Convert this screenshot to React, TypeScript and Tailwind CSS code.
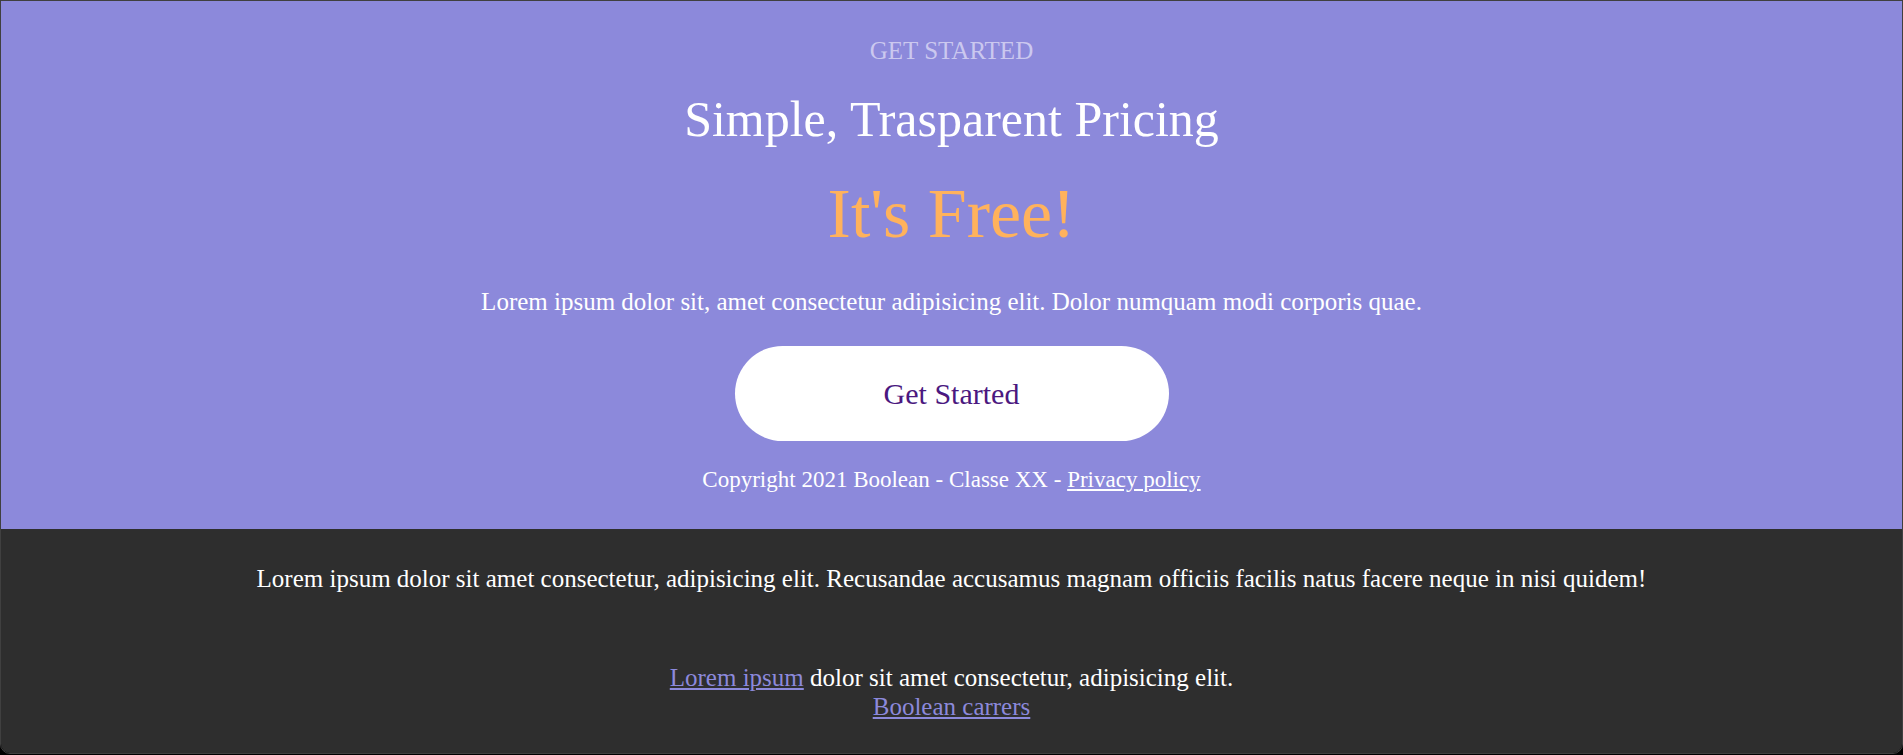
const serif = "font-['Liberation_Serif','Times_New_Roman',serif]";

const App = () => {
  return (
    <div className={`bg-black h-[755px] ${serif}`}>
      <div className="h-[754px] flex flex-col overflow-hidden rounded-b-[10px] border border-white/25">
        <section className="bg-[#8c89db] flex flex-col items-center text-center pt-[37px] pb-[38px]">
          <div className="text-[25px] leading-none text-[#cbc8ef]">GET STARTED</div>
          <h1 className="mt-[31px] text-[50px] leading-none text-white">Simple, Trasparent Pricing</h1>
          <h2 className="mt-[35px] text-[70px] leading-none text-[#ffb25c]">It's Free!</h2>
          <p className="mt-[40px] text-[25px] leading-none text-white">
            Lorem ipsum dolor sit, amet consectetur adipisicing elit. Dolor numquam modi corporis quae.
          </p>
          <button className="mt-[32px] w-[434px] h-[95px] rounded-full bg-white text-[30px] leading-none text-[#4b1880]">
            Get Started
          </button>
          <div className="mt-[27px] text-[23px] leading-none text-white">
            Copyright 2021 Boolean - Classe XX - <a href="#" className="underline">Privacy policy</a>
          </div>
        </section>
        <footer className="flex-1 bg-[#2e2e2e] flex flex-col items-center text-center text-white pt-[37px]">
          <p className="text-[25px] leading-none">
            Lorem ipsum dolor sit amet consectetur, adipisicing elit. Recusandae accusamus magnam officiis facilis natus facere neque in nisi quidem!
          </p>
          <div className="mt-[72px] text-[25px] leading-[29px]">
            <div>
              <a href="#" className="underline text-[#8c89db]">Lorem ipsum</a> dolor sit amet consectetur, adipisicing elit.
            </div>
            <a href="#" className="underline text-[#8c89db]">Boolean carrers</a>
          </div>
        </footer>
      </div>
    </div>
  );
};

export default App;
